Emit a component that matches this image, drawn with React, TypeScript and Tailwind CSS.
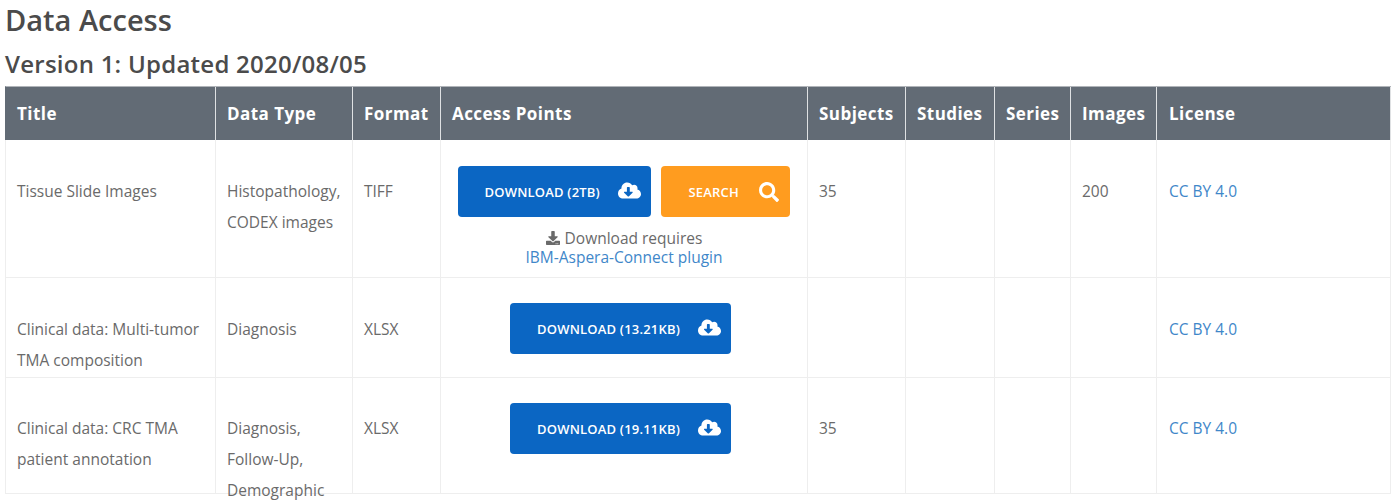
import { FaCloudDownloadAlt, FaSearch, FaDownload } from "react-icons/fa";

const cols = "grid w-[1385px] box-content grid-cols-[210px_137px_88px_367px_98px_89px_76px_86px_234px]";
const cell = "border-r border-b border-[#eeeeee] px-[11px] pt-[36px] leading-[31px]";
const cellLast = "border-r border-b border-[#eeeeee] px-[11px] pt-[35px] leading-[31px]";
const link = "text-[#3f87c9] pl-[12px]";
const btnText = "text-[13px] font-semibold leading-none tracking-[0.2px] mt-[1px]";

function DownloadButton({ label, width }: { label: string; width: string }) {
  return (
    <div className={`${width} h-[51px] bg-[#0b66c3] rounded-[4px] flex items-center justify-between pl-[27px] pr-[10px] text-white`}>
      <span className={btnText}>{label}</span>
      <FaCloudDownloadAlt className="text-[23px] -mt-[3px]" />
    </div>
  );
}

export default function App() {
  return (
    <div className="w-[1400px] h-[502px] overflow-hidden bg-white pl-[5px] text-[15.5px] text-[#6a6a6a] font-['Open_Sans',sans-serif]">
      <h1 className="text-[29px] font-semibold leading-[40px] text-[#4b4b4b]">Data Access</h1>
      <h2 className="text-[24px] font-semibold leading-[30px] mt-[9px] mb-[7px] text-[#4b4b4b] tracking-[0.25px]">Version 1: Updated 2020/08/05</h2>

      <div className={`${cols} h-[53px] bg-[#626b75] text-white text-[17px] font-bold leading-[53px] tracking-[0.45px] border-t border-l border-t-[#b0b4b9] border-l-[#626b75]`}>
        {["Title", "Data Type", "Format", "Access Points", "Subjects", "Studies", "Series", "Images"].map((h) => (
          <div key={h} className="px-[11px] border-r border-[#dfe1e3] whitespace-nowrap">{h}</div>
        ))}
        <div className="pl-[12px] border-r border-[#dfe1e3] whitespace-nowrap">License</div>
      </div>

      <div className={`${cols} grid-rows-[138px] border-l border-[#eeeeee]`}>
        <div className={cell}>Tissue Slide Images</div>
        <div className={cell}>Histopathology, CODEX images</div>
        <div className={cell}>TIFF</div>
        <div className="border-r border-b border-[#eeeeee] pt-[26px] flex flex-col items-center">
          <div className="flex gap-[10px] -ml-[1px]">
            <DownloadButton label="DOWNLOAD (2TB)" width="w-[193px]" />
            <div className="w-[129px] h-[51px] bg-[#ff9c1f] rounded-[4px] flex items-center justify-between pl-[28px] pr-[11px] text-white">
              <span className={btnText}>SEARCH</span>
              <FaSearch className="text-[20px]" />
            </div>
          </div>
          <div className="mt-[12px] text-center">
            <div className="h-[19px] leading-[19px]">
              <FaDownload className="inline text-[14px] mb-[4px] mr-[5px]" />
              Download requires
            </div>
            <div className="leading-[19px] text-[#3f87c9]">IBM-Aspera-Connect plugin</div>
          </div>
        </div>
        <div className={cell}>35</div>
        <div className={cell}></div>
        <div className={cell}></div>
        <div className={cell}>200</div>
        <div className={`${cell} ${link}`}>CC BY 4.0</div>
      </div>

      <div className={`${cols} grid-rows-[100px] border-l border-[#eeeeee]`}>
        <div className={cell}>Clinical data: Multi-tumor TMA composition</div>
        <div className={cell}>Diagnosis</div>
        <div className={cell}>XLSX</div>
        <div className="border-r border-b border-[#eeeeee] pt-[25px] pl-[69px]">
          <DownloadButton label="DOWNLOAD (13.21KB)" width="w-[221px]" />
        </div>
        <div className={cell}></div>
        <div className={cell}></div>
        <div className={cell}></div>
        <div className={cell}></div>
        <div className={`${cell} ${link}`}>CC BY 4.0</div>
      </div>

      <div className={`${cols} grid-rows-[116px] border-l border-[#eeeeee]`}>
        <div className={cellLast}>Clinical data: CRC TMA patient annotation</div>
        <div className={cellLast}>Diagnosis, Follow-Up, Demographic</div>
        <div className={cellLast}>XLSX</div>
        <div className="border-r border-b border-[#eeeeee] pt-[25px] pl-[69px]">
          <DownloadButton label="DOWNLOAD (19.11KB)" width="w-[221px]" />
        </div>
        <div className={cellLast}>35</div>
        <div className={cellLast}></div>
        <div className={cellLast}></div>
        <div className={cellLast}></div>
        <div className={`${cellLast} ${link}`}>CC BY 4.0</div>
      </div>
    </div>
  );
}
